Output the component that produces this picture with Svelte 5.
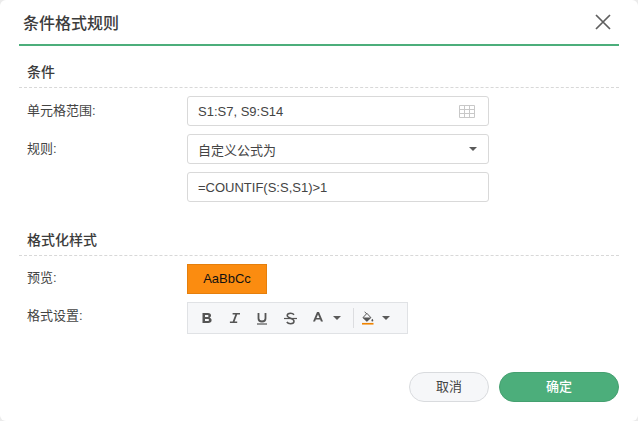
<script>
    const buttons = ["b", "i", "u", "s"];
</script>

<div class="dialog">
    <header class="title-bar">
        <h1>条件格式规则</h1>
        <button class="close" aria-label="关闭">
            <svg width="16" height="16" viewBox="0 0 16 16">
                <path d="M1 1 L15 15 M15 1 L1 15" stroke="#5f5f5f" stroke-width="1.7" fill="none" />
            </svg>
        </button>
    </header>

    <section class="section first">
        <h2>条件</h2>
        <div class="row">
            <span class="label">单元格范围:</span>
            <div class="field">
                <span>S1:S7, S9:S14</span>
                <svg class="grid" width="16" height="13" viewBox="0 0 16 13">
                    <path d="M.5 .5H15.5V12.5H.5Z M.5 4.5H15.5 M.5 8.5H15.5 M5.5 .5V12.5 M10.5 .5V12.5" stroke="#c8c8c8" fill="none" />
                </svg>
            </div>
        </div>
        <div class="row">
            <span class="label">规则:</span>
            <div class="field">
                <span>自定义公式为</span>
                <span class="caret select-caret"></span>
            </div>
        </div>
        <div class="row">
            <span class="label"></span>
            <div class="field"><span>=COUNTIF(S:S,S1)&gt;1</span></div>
        </div>
    </section>

    <section class="section second">
        <h2>格式化样式</h2>
        <div class="row preview-row">
            <span class="label">预览:</span>
            <div class="preview">AaBbCc</div>
        </div>
        <div class="row">
            <span class="label">格式设置:</span>
            <div class="toolbar">
                {#each buttons as b}
                    <span class="tool {b}">
                        {#if b === "b"}
                            <svg width="12" height="12" viewBox="0 0 12 12"><path fill-rule="evenodd" fill="#555" d="M1.5 1H7C9 1 10 2 10 3.6 10 4.7 9.4 5.4 8.6 5.7 9.8 6 10.6 6.9 10.6 8.2 10.6 10 9.3 11 7.2 11H1.5ZM4 3V5H6.4C7.1 5 7.5 4.6 7.5 4S7.1 3 6.4 3ZM4 7V9H6.6C7.5 9 8 8.6 8 8S7.5 7 6.6 7Z" /></svg>
                        {:else if b === "i"}
                            <svg width="12" height="12" viewBox="0 0 12 12"><path fill="#555" d="M3.6 1H11V2.4H8.2L5.6 9.6H8.2V11H.9V9.6H3.7L6.3 2.4H3.6Z" /></svg>
                        {:else if b === "u"}
                            <svg width="12" height="13" viewBox="0 0 12 13"><path d="M2.5 1V6.5C2.5 8.5 3.8 9.5 6 9.5S9.5 8.5 9.5 6.5V1" stroke="#555" stroke-width="1.8" fill="none" /><path d="M1 12H11" stroke="#555" stroke-width="1.2" /></svg>
                        {:else}
                            <svg width="13" height="13" viewBox="0 0 13 13"><path d="M10 2.7C9.2 1.6 8 1.2 6.6 1.2 4.6 1.2 3.2 2.1 3.2 3.6 3.2 6.6 10 6 10 9.2 10 10.8 8.5 11.7 6.5 11.7 5 11.7 3.6 11.2 2.8 10" stroke="#555" stroke-width="1.5" fill="none" /><path d="M0 6.5H13" stroke="#555" stroke-width="1.2" /></svg>
                        {/if}
                    </span>
                {/each}
                <span class="tool color">
                    <svg class="letter" width="10" height="10" viewBox="0 0 11 11"><path fill="#555" fill-rule="evenodd" d="M4.4 0H6.6L11 10.5H8.7L7.9 8.3H3.1L2.3 10.5H0ZM5.5 2.8 3.8 6.5H7.2Z" /></svg>
                    <span class="caret"></span>
                </span>
                <span class="sep"></span>
                <span class="tool fill">
                    <svg width="14" height="18" viewBox="0 0 14 18">
                        <path d="M3.2 1.6 6 4" stroke="#555" stroke-width="1.2" fill="none" />
                        <path d="M6 3.4 10.8 8.5 6 13 1.2 8.5Z" stroke="#555" stroke-width="1.2" fill="#f6f7f9" />
                        <path d="M.8 8.5H11.2L6 13.4Z" fill="#555" />
                        <path d="M12.6 9.8C13.3 10.9 13.8 11.4 13.8 12.1A1.2 1.2 0 0 1 11.4 12.1C11.4 11.4 11.9 10.9 12.6 9.8Z" fill="#555" />
                        <rect x="0" y="15" width="14" height="2" fill="#f08300" />
                    </svg>
                    <span class="caret"></span>
                </span>
            </div>
        </div>
    </section>

    <footer class="actions">
        <button class="btn cancel">取消</button>
        <button class="btn ok">确定</button>
    </footer>
</div>

<style>
    :global(body) {
        background: #ebebeb;
    }

    .dialog {
        width: 638px;
        height: 421px;
        box-sizing: border-box;
        padding: 0 19px;
        background: #fff;
        border-radius: 6px;
        display: flex;
        flex-direction: column;
        font-family: "Liberation Sans", "Noto Sans CJK SC", sans-serif;
        color: #444;
        font-size: 13px;
    }

    .title-bar {
        height: 46px;
        box-sizing: border-box;
        border-bottom: 2px solid #4cae7b;
        display: flex;
        align-items: center;
        justify-content: space-between;
        padding: 0 8px 0 4px;
        flex: none;
    }

    h1 {
        margin: 0 0 1px;
        font-size: 16px;
        font-weight: 500;
        color: #3c3c3c;
    }

    .close {
        border: none;
        background: none;
        padding: 0;
        display: flex;
    }

    h2 {
        margin: 0;
        height: 30px;
        line-height: 30px;
        padding-left: 8px;
        font-size: 14px;
        font-weight: 500;
        color: #3c3c3c;
        border-bottom: 1px dashed #d8d8d8;
        margin-bottom: 8px;
    }

    .first {
        padding-top: 11px;
    }

    .first .label {
        line-height: 30px;
    }

    .second {
        padding-top: 15px;
    }

    .row {
        display: flex;
        align-items: flex-start;
        padding-left: 8px;
        margin-bottom: 8px;
    }

    .label {
        width: 160px;
        flex: none;
        line-height: 28px;
        color: #444;
    }

    .field {
        width: 302px;
        height: 30px;
        box-sizing: border-box;
        border: 1px solid #d9d9d9;
        border-radius: 3px;
        padding: 0 10px;
        display: flex;
        align-items: center;
        justify-content: space-between;
        color: #444;
    }

    .grid {
        margin-right: 3px;
    }

    .caret {
        width: 0;
        height: 0;
        border-left: 4px solid transparent;
        border-right: 4px solid transparent;
        border-top: 4px solid #5a5a5a;
    }

    .select-caret {
        margin-right: 1px;
    }

    .preview {
        width: 80px;
        height: 30px;
        box-sizing: border-box;
        background: #fb8c10;
        border: 1px solid #e57f0c;
        color: #111;
        font-size: 13px;
        line-height: 28px;
        text-align: center;
    }

    .preview-row {
        margin-bottom: 8px;
    }

    .toolbar {
        width: 221px;
        height: 32px;
        box-sizing: border-box;
        background: #f6f7f9;
        border: 1px solid #e0e2e5;
        display: flex;
        align-items: center;
        padding-left: 13px;
    }

    .tool {
        display: flex;
        align-items: center;
        width: 27.5px;
    }

    .color {
        width: 40px;
        padding-left: 2px;
        box-sizing: border-box;
        gap: 10px;
    }

    .letter {
        margin-top: -3px;
    }

    .sep {
        width: 1px;
        height: 20px;
        background: #dcdde0;
        margin: 0 8px 0 2px;
    }

    .fill {
        gap: 8px;
    }

    .actions {
        margin-top: auto;
        padding-bottom: 19px;
        display: flex;
        justify-content: flex-end;
        gap: 10px;
    }

    .btn {
        height: 30px;
        border-radius: 15px;
        font-family: inherit;
        font-size: 13px;
        padding: 0 0 3px;
    }

    .cancel {
        width: 80px;
        background: #f6f7f9;
        border: 1px solid #d9dbde;
        color: #444;
    }

    .ok {
        width: 120px;
        background: #4cae7b;
        border: 1px solid #45a070;
        color: #fff;
        font-weight: 500;
    }
</style>
